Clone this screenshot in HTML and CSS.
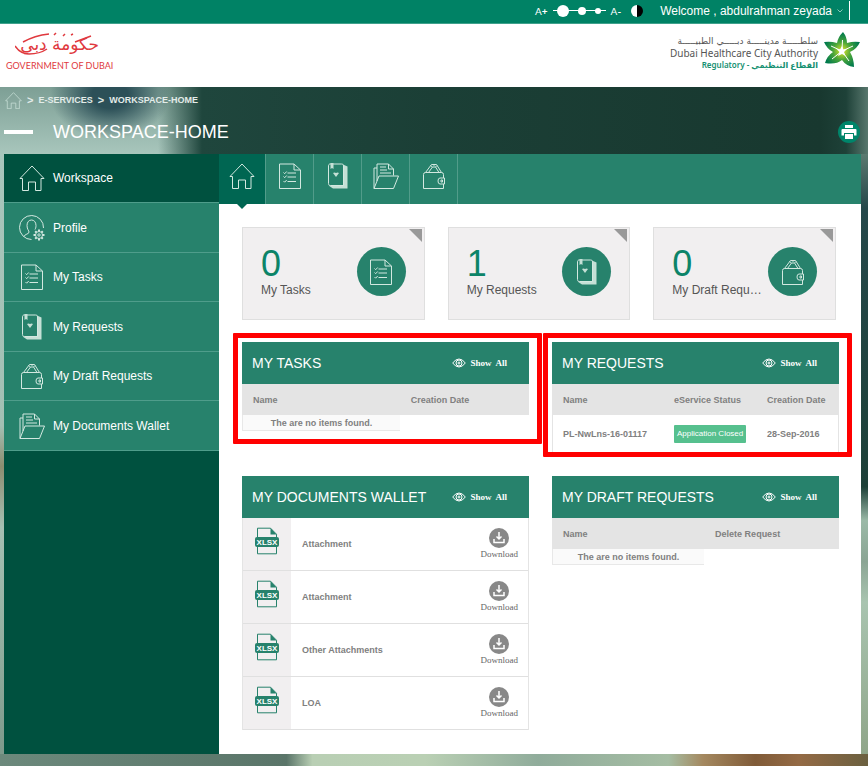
FILE: index.html
```html
<!DOCTYPE html>
<html lang="en">
<head>
    <meta charset="UTF-8">
    <meta name="viewport" content="width=device-width, initial-scale=1.0">
    <title>Workspace-Home</title>
    <link rel="stylesheet" href="styles.css">
</head>
<body>
    <!-- shared icons -->
    <svg class="sprite" aria-hidden="true">
        <symbol id="home" viewBox="0 0 26 26">
            <path d="M1 13.5 13 1l12 12.5h-3v12h-5.5V17h-7v8.5h-6v-12z"/>
        </symbol>
        <symbol id="profile" viewBox="0 0 26 26">
            <path d="M12.5 24.5A12 12 0 1 1 24.5 13M5 21.5c1-3 5-2 5-4.500 0-1.500-2-2.500-2-6.500 0-3.500 2-5.500 4.500-5.500s4.500 2 4.500 5.500c0 2-.5 3-1 4"/>
            <circle cx="20" cy="20" r="3.5"/>
            <circle cx="20" cy="20" r="1.2"/>
            <path stroke-width="2" d="M20 14.5v2M20 23.5v2M14.5 20h2M23.500 20h2M16.200 16.200l1.300 1.300M22.500 22.500l1.300 1.300M16.200 23.800l1.300-1.300M22.500 17.500l1.300-1.300"/>
        </symbol>
        <symbol id="tasks" viewBox="0 0 26 26">
            <path d="M2.5 1H17l6.500 6v18.500h-21zM17 1v6h6.500M10.500 10H19M10.500 14H19M10.500 18.500H19M6.500 9.500l1.200 1.200 2-2.200M6.500 13.500l1.200 1.200 2-2.200M6.500 18l1.200 1.200 2-2.200"/>
        </symbol>
        <symbol id="requests" viewBox="0 0 26 26">
            <path class="solid" d="M18 1.500l4.500 2V25.500H8L3.500 22.500H18z"/>
            <path d="M5 1h11.500c1.300 0 2 .7 2 2v19.500h-13c-1.300 0-2-.7-2-2V3c0-1.200.5-2 1.500-2z"/>
            <path class="solid" d="M5.500 0h3v6L7 5 5.500 6zM8 10q1.500-1 3 0 1.500-1 3 0l-3 4z"/>
        </symbol>
        <symbol id="draft" viewBox="0 0 26 26">
            <path d="M2.500 25.500v-14q0-2 2-2h16q2 0 2 2V15M22.500 21v4.500h-20M4.500 9.500l6-8h5l5 8M7.500 9.500l4-5.500h3l3.500 5.500M9.500 2.500l2 1.500M16 2.500 14.500 4M12 1l1 1.500L14 1"/>
            <path d="M23.500 15H19q-2 0-2 3t2 3h4.500zM20 17h1.500v2H20z"/>
        </symbol>
        <symbol id="folder" viewBox="0 0 26 26">
            <path d="M1 25.500V5h3M1 25.500h19.500l5-12.500H6zM4 18V1h11.500l5 5v6.500M15.500 1v5h5M7 4h6M7 7h7M7 10h11"/>
        </symbol>
        <symbol id="eye" viewBox="0 0 14 10">
            <path d="M.7 5Q3.500 1 7 1t6.300 4Q10.500 9 7 9T.7 5z"/>
            <circle cx="7" cy="5" r="3"/>
            <circle cx="7" cy="5" r="1"/>
        </symbol>
        <symbol id="xlsx" viewBox="0 0 26 28">
            <path d="M3.500 10V1.200h13l6 6V10M3.500 19v7.800h19V19"/>
            <path class="solid" d="M16.500 1v6.500h6z"/>
            <rect class="solid" x="1" y="10" width="24" height="10" rx="2"/>
            <text x="13" y="18" text-anchor="middle">XLSX</text>
        </symbol>
        <symbol id="download" viewBox="0 0 20 20">
            <circle class="disc" cx="10" cy="10" r="10"/>
            <path d="M10 4v7M7.500 8.500 10 11l2.500-2.500M5 11v3.500h10V11"/>
        </symbol>
    </svg>

    <div class="topbar">
        <div class="font-size">
            <button type="button">A<b>+</b></button>
            <div class="dots">
                <button type="button" class="dot dot-large" aria-label="Large text"></button>
                <button type="button" class="dot dot-medium" aria-label="Medium text"></button>
                <button type="button" class="dot dot-small" aria-label="Small text"></button>
            </div>
            <button type="button">A<b>-</b></button>
        </div>
        <button type="button" class="contrast" aria-label="Contrast"></button>
        <button type="button" class="user">Welcome , abdulrahman zeyada
            <svg class="chevron" viewBox="0 0 6 4"><path d="M.5.5 3 3 5.500.5"/></svg>
        </button>
    </div>

    <header class="header">
        <a href="#" class="gov-logo">
            <svg viewBox="0 0 88 28" aria-hidden="true">
                <path d="M0 14c4 6 8 8 14 8 6 0 12-1 18-5M8 10C17 5 25 3 34 2"/>
                <path d="M76 4 60 10M39 3l2-2M48 4l2-2M56 3l2-1"/>
                <text x="84" y="18" text-anchor="end">حكومة دبي</text>
            </svg>
            <span>GOVERNMENT OF DUBAI</span>
        </a>
        <a href="#" class="dhcc-logo">
            <span class="dhcc-text">
                <span class="dhcc-ar" lang="ar" dir="rtl">سلطـــــة مدينـــــة دبـــــي الطبيـــــة</span>
                <span class="dhcc-en">Dubai Healthcare City Authority</span>
                <span class="dhcc-reg">Regulatory - <bdi lang="ar">القطاع التنظيمي</bdi></span>
            </span>
            <svg class="star" viewBox="0 0 36 36" aria-hidden="true">
                <defs>
                    <radialGradient id="leaf" gradientUnits="userSpaceOnUse" cx="18" cy="19" r="18">
                        <stop offset="0.1" stop-color="#c5d92d"/>
                        <stop offset="0.5" stop-color="#4aa53a"/>
                        <stop offset="1" stop-color="#007a4d"/>
                    </radialGradient>
                </defs>
                <path fill="url(#leaf)" d="M19 0q4 5 4 11 6-2 13-1-3 7-10 10 4 7 4 15-8-1-12-7-6 5-17 3 2-7 8-11Q3 17 0 10q7-1 13 1 1-6 6-11z"/>
                <path stroke="#fff" d="M18 19 18.500 8M18 19l11-5M18 19l7 10M18 19 8 27M18 19 7 14"/>
                <path fill="#fff" d="M18 14l1.500 3.500L23 17l-3 3 1.500 4-3.500-2-4 2 1.500-4-3-3 3.500.5z"/>
            </svg>
        </a>
    </header>

    <div class="page">
        <div class="hero">
            <nav class="breadcrumb" aria-label="Breadcrumb">
                <a href="#" aria-label="Home"><svg class="icon"><use href="#home"/></svg></a>
                <span>&gt;</span>
                <a href="#">E-SERVICES</a>
                <span>&gt;</span>
                <a href="#">WORKSPACE-HOME</a>
            </nav>
            <div class="title-row">
                <h1>WORKSPACE-HOME</h1>
                <button type="button" class="print" aria-label="Print">
                    <svg viewBox="0 0 16 16"><path d="M4 1h8v3H4zM1.500 5h13q1 0 1 1v5.500H13V9H3v2.500H.5V6q0-1 1-1zM4 10h8v5H4z"/></svg>
                </button>
            </div>
        </div>

        <div class="shell">
            <nav class="sidebar" aria-label="Workspace">
                <a href="#" class="active"><svg class="icon"><use href="#home"/></svg>Workspace</a>
                <a href="#"><svg class="icon"><use href="#profile"/></svg>Profile</a>
                <a href="#"><svg class="icon"><use href="#tasks"/></svg>My Tasks</a>
                <a href="#"><svg class="icon"><use href="#requests"/></svg>My Requests</a>
                <a href="#"><svg class="icon"><use href="#draft"/></svg>My Draft Requests</a>
                <a href="#"><svg class="icon"><use href="#folder"/></svg>My Documents Wallet</a>
            </nav>

            <main class="main">
                <nav class="tabs" aria-label="Sections">
                    <a href="#" class="active" aria-label="Home"><svg class="icon"><use href="#home"/></svg></a>
                    <a href="#" aria-label="My Tasks"><svg class="icon"><use href="#tasks"/></svg></a>
                    <a href="#" aria-label="My Requests"><svg class="icon"><use href="#requests"/></svg></a>
                    <a href="#" aria-label="My Documents Wallet"><svg class="icon"><use href="#folder"/></svg></a>
                    <a href="#" aria-label="My Draft Requests"><svg class="icon"><use href="#draft"/></svg></a>
                </nav>

                <div class="content">
                    <div class="cards">
                        <a href="#" class="card">
                            <span class="card-text"><span class="count">0</span><span class="label">My Tasks</span></span>
                            <span class="card-icon"><svg class="icon"><use href="#tasks"/></svg></span>
                        </a>
                        <a href="#" class="card">
                            <span class="card-text"><span class="count">1</span><span class="label">My Requests</span></span>
                            <span class="card-icon"><svg class="icon"><use href="#requests"/></svg></span>
                        </a>
                        <a href="#" class="card">
                            <span class="card-text"><span class="count">0</span><span class="label">My Draft Requests</span></span>
                            <span class="card-icon"><svg class="icon"><use href="#draft"/></svg></span>
                        </a>
                    </div>

                    <div class="panels">
                        <section class="panel marked">
                            <div class="panel-head">
                                <h2>MY TASKS</h2>
                                <a href="#"><svg class="eye"><use href="#eye"/></svg>Show&nbsp; All</a>
                            </div>
                            <table class="tasks-table">
                                <thead><tr><th>Name</th><th>Creation Date</th></tr></thead>
                                <tbody><tr><td class="empty">The are no items found.</td></tr></tbody>
                            </table>
                        </section>

                        <section class="panel marked marked-tight">
                            <div class="panel-head">
                                <h2>MY REQUESTS</h2>
                                <a href="#"><svg class="eye"><use href="#eye"/></svg>Show&nbsp; All</a>
                            </div>
                            <table class="requests-table">
                                <thead><tr><th>Name</th><th>eService Status</th><th>Creation Date</th></tr></thead>
                                <tbody>
                                    <tr><td>PL-NwLns-16-01117</td><td><span class="badge">Application Closed</span></td><td>28-Sep-2016</td></tr>
                                </tbody>
                            </table>
                        </section>

                        <section class="panel">
                            <div class="panel-head">
                                <h2>MY DOCUMENTS WALLET</h2>
                                <a href="#"><svg class="eye"><use href="#eye"/></svg>Show&nbsp; All</a>
                            </div>
                            <ul class="documents">
                                <li><span class="file"><svg class="xlsx"><use href="#xlsx"/></svg></span><span class="file-name">Attachment</span><a href="#"><svg class="download"><use href="#download"/></svg>Download</a></li>
                                <li><span class="file"><svg class="xlsx"><use href="#xlsx"/></svg></span><span class="file-name">Attachment</span><a href="#"><svg class="download"><use href="#download"/></svg>Download</a></li>
                                <li><span class="file"><svg class="xlsx"><use href="#xlsx"/></svg></span><span class="file-name">Other Attachments</span><a href="#"><svg class="download"><use href="#download"/></svg>Download</a></li>
                                <li><span class="file"><svg class="xlsx"><use href="#xlsx"/></svg></span><span class="file-name">LOA</span><a href="#"><svg class="download"><use href="#download"/></svg>Download</a></li>
                            </ul>
                        </section>

                        <section class="panel">
                            <div class="panel-head">
                                <h2>MY DRAFT REQUESTS</h2>
                                <a href="#"><svg class="eye"><use href="#eye"/></svg>Show&nbsp; All</a>
                            </div>
                            <table class="draft-table">
                                <thead><tr><th>Name</th><th>Delete Request</th></tr></thead>
                                <tbody><tr><td class="empty">The are no items found.</td></tr></tbody>
                            </table>
                        </section>
                    </div>
                </div>
            </main>
        </div>
    </div>
</body>
</html>
```

FILE: styles.css
```css
* {
    box-sizing: border-box;
}
body {
    margin: 0;
    font-family: "Liberation Sans", Arial, sans-serif;
    font-size: 12px;
    color: #666;
    background: #fff;
}
a {
    color: inherit;
    text-decoration: none;
}
button {
    padding: 0;
    border: 0;
    background: none;
    color: inherit;
    font: inherit;
    cursor: pointer;
}
h1, h2 {
    margin: 0;
    font-weight: normal;
}
svg {
    display: block;
    flex: none;
    fill: none;
}
.sprite {
    display: none;
}
.icon {
    width: 26px;
    height: 26px;
    stroke: #d3e8e0;
}
.solid {
    fill: #c5e0d6;
    stroke: none;
}

/* top bar */
.topbar {
    display: flex;
    align-items: center;
    justify-content: flex-end;
    height: 24px;
    padding: 0 18px 2px 0;
    color: #fff;
    background: #008265;
    border-bottom: 1px solid #40a18c;
}
.font-size {
    display: flex;
    align-items: center;
    gap: 5px;
    font-family: Lato, sans-serif;
    font-size: 10px;
}
.dots {
    display: flex;
    align-items: center;
    gap: 9px;
    width: 53px;
    padding-left: 4px;
    background: linear-gradient(#fff, #fff) center / 100% 1px no-repeat;
}
.dot {
    border-radius: 50%;
    background: #fff;
}
.dot-large {
    width: 12px;
    height: 12px;
}
.dot-medium {
    width: 8px;
    height: 8px;
}
.dot-small {
    width: 6px;
    height: 6px;
}
.contrast {
    width: 12px;
    height: 12px;
    margin: 0 17px 0 10px;
    border-radius: 50%;
    background: linear-gradient(90deg, #fff 50%, #000 50%);
}
.user {
    display: flex;
    align-items: center;
    gap: 5px;
    height: 19px;
    padding-right: 6px;
    border-right: 1px solid #fff;
}
.chevron {
    width: 6px;
    height: 4px;
    stroke: #8cc8b9;
}

/* logos */
.header {
    display: flex;
    justify-content: space-between;
    align-items: flex-start;
    height: 63px;
    padding: 8px 8px 0 6px;
}
.gov-logo {
    color: #e0393e;
    font-family: Lato, sans-serif;
    font-size: 9px;
    line-height: 12px;
}
.gov-logo svg {
    width: 88px;
    height: 28px;
    margin-left: 9px;
    stroke: #e0393e;
    stroke-width: 1.5;
}
.gov-logo text {
    fill: #e0393e;
    stroke: none;
    font-family: "DejaVu Sans", sans-serif;
    font-size: 17px;
}
.dhcc-logo {
    display: flex;
    gap: 6px;
}
.dhcc-text {
    display: flex;
    flex-direction: column;
    align-items: flex-end;
    padding-top: 3px;
    color: #555;
    font-family: "Noto Sans", "DejaVu Sans", sans-serif;
    font-size: 10px;
    line-height: 12px;
}
.dhcc-ar {
    font-family: "DejaVu Sans", sans-serif;
    font-size: 9px;
}
.dhcc-reg {
    color: #159071;
    font-size: 8px;
    font-weight: 600;
}
.star {
    width: 36px;
    height: 36px;
}

/* soft photo tones around the workspace */
.page {
    padding: 0 7px 12px 4px;
    background:
        linear-gradient(90deg, #6c897c 0, #5a7569 33%, #b9cfb4 36%, #bad0b4 49%, #90ac9b 62%, #a5bda3 77%, #a4885f 81%, #805b38 87%, #946a45 92%, #6b6040) bottom / 100% 12px no-repeat,
        linear-gradient(#a8c6bc 0, #a3c0b4 40%, #8c8d70 46%, #a5c0b3 55%, #8fab9c 75%, #6c897c) left 67px / 4px 100% no-repeat,
        linear-gradient(#5b7a70 0, #25484a 8%, #1d4038 49%, #9bb9a7 54%, #8ba594 60%, #a9c4b0 66%, #90a68a 88%, #6c6a45) right 67px / 7px 100% no-repeat,
        radial-gradient(ellipse 60px 44px at 110px 8px, #2c5058 30%, rgba(44, 80, 88, 0)) no-repeat,
        linear-gradient(90deg, rgba(31, 70, 61, 0) 158px, #1f463d 202px, #1b3f36 50%, #18382f 820px, #1e4138 846px, #58776d) no-repeat,
        linear-gradient(#7d9f95, #a8c6bc 67px);
}
.hero {
    height: 67px;
    padding-top: 4px;
    color: #fff;
}
.breadcrumb {
    display: flex;
    align-items: center;
    gap: 5px;
    height: 18px;
    padding-left: 1px;
    font-size: 9px;
    font-weight: bold;
    color: #e3ece9;
}
.breadcrumb span {
    font-size: 11px;
}
.breadcrumb .icon {
    width: 17px;
    height: 17px;
}
.title-row {
    display: flex;
    align-items: center;
    height: 24px;
    margin-top: 11px;
    padding-right: 1px;
}
.title-row::before {
    content: "";
    width: 29px;
    height: 4px;
    margin-right: 20px;
    background: #fff;
}
h1 {
    flex: 1;
    font-size: 18px;
}
.print {
    display: grid;
    place-items: center;
    width: 22px;
    height: 22px;
    border-radius: 50%;
    background: #00856a;
}
.print svg {
    width: 16px;
    height: 16px;
    fill: #fff;
}

/* workspace */
.shell {
    display: flex;
}
.sidebar {
    flex: none;
    width: 215px;
    background: #00513f;
}
.sidebar a {
    display: flex;
    align-items: center;
    gap: 8px;
    height: 49px;
    padding-left: 15px;
    color: #fff;
    background: #27826c;
    border-bottom: 1px solid #4f9d8b;
}
.sidebar a:nth-child(even) {
    height: 50px;
}
.sidebar .active {
    background: #00513f;
}
.main {
    flex: 1;
    min-width: 0;
    background: #fff;
}
.tabs {
    display: flex;
    height: 50px;
    background: #27826c;
}
.tabs a {
    position: relative;
    display: flex;
    justify-content: center;
    width: 48px;
    padding-top: 9px;
    border-right: 1px solid #529c8a;
}
.tabs .active {
    width: 47px;
    background: #006652;
}
.tabs .active::after {
    content: "";
    position: absolute;
    top: 100%;
    left: 50%;
    margin-left: -5px;
    border: 5px solid transparent;
    border-top-color: #006652;
    border-bottom: 0;
}
.content {
    padding: 23px 22px 24px 23px;
}

/* counters */
.cards {
    display: grid;
    grid-template-columns: repeat(3, 1fr);
    gap: 23px;
    margin-right: 3px;
}
.card {
    position: relative;
    display: flex;
    align-items: center;
    justify-content: space-between;
    gap: 6px;
    min-width: 0;
    height: 93px;
    padding: 0 18px;
    background: #f1eff0;
    border: 1px solid #dfdfdf;
}
.card::after {
    content: "";
    position: absolute;
    top: 1px;
    right: 2px;
    border-top: 13px solid #999;
    border-left: 13px solid transparent;
}
.card-text {
    min-width: 0;
    padding-bottom: 4px;
}
.count, .label {
    display: block;
}
.count {
    color: #0c8468;
    font-size: 36px;
    line-height: 36px;
}
.label {
    overflow: hidden;
    text-overflow: ellipsis;
    white-space: nowrap;
    line-height: 16px;
    color: #555;
}
.card-icon {
    flex: none;
    display: grid;
    place-items: center;
    width: 49px;
    height: 49px;
    margin-bottom: 4px;
    border-radius: 50%;
    background: #27826c;
}

/* panels */
.panels {
    display: grid;
    grid-template-columns: 1fr 1fr;
    align-items: start;
    gap: 24px 23px;
    margin-top: 22px;
}
.panel {
    position: relative;
    min-width: 0;
}
.marked::after {
    content: "";
    position: absolute;
    inset: -9px -13px -13px -9px;
    border: 5px solid #f00;
    border-radius: 1px;
    pointer-events: none;
}
.marked-tight::after {
    bottom: -5px;
}
.panel-head {
    display: flex;
    align-items: center;
    justify-content: space-between;
    height: 42px;
    padding: 0 22px 0 10px;
    color: #fff;
    background: #27826c;
}
h2 {
    font-size: 14px;
}
.panel-head a {
    display: flex;
    align-items: center;
    gap: 4px;
    font-family: "Liberation Serif", serif;
    font-size: 9px;
    font-weight: bold;
}
.eye {
    width: 14px;
    height: 10px;
    stroke: #fff;
}
table {
    width: 100%;
    table-layout: fixed;
    border-collapse: separate;
    border-spacing: 0;
    font-size: 9px;
    font-weight: bold;
    color: #808080;
}
th {
    height: 31px;
    padding: 0 0 0 11px;
    text-align: left;
    white-space: nowrap;
    background: #e4e4e4;
}
td {
    height: 37px;
    padding: 0 0 0 11px;
    white-space: nowrap;
}
.requests-table td:first-child {
    border-left: 1px solid #e4e4e4;
    padding-left: 10px;
}
.requests-table td:last-child {
    border-right: 1px solid #e4e4e4;
}
.tasks-table th:first-child {
    width: 55%;
}
.draft-table th:first-child {
    width: 53%;
}
.requests-table th:first-child {
    width: 111px;
}
.requests-table th:last-child {
    width: 83px;
}
.empty {
    height: 16px;
    padding: 0;
    text-align: center;
    background: #fafafa;
    border: solid #e8e8e8;
    border-width: 0 0 1px 1px;
}
.badge {
    display: inline-block;
    padding: 0 3px;
    border-radius: 1px;
    color: #fff;
    background: #56c08e;
    font-size: 8px;
    font-weight: normal;
    line-height: 18px;
}

/* documents */
.documents {
    margin: 0;
    padding: 0;
    list-style: none;
    border: solid #e4e4e4;
    border-width: 0 1px;
}
.documents li {
    display: flex;
    align-items: center;
    height: 53px;
    padding-right: 10px;
    border-bottom: 1px solid #e0e0e0;
}
.file {
    display: flex;
    justify-content: center;
    align-self: stretch;
    width: 48px;
    padding-top: 9px;
    background: #f1eff0;
}
.xlsx {
    width: 26px;
    height: 28px;
    stroke: #27826c;
}
#xlsx .solid {
    fill: #27826c;
}
#xlsx text {
    fill: #fff;
    stroke: none;
    font-size: 8px;
    font-weight: bold;
}
.file-name {
    flex: 1;
    padding-left: 11px;
    font-size: 9px;
    font-weight: bold;
    color: #808080;
}
.documents a {
    display: flex;
    flex-direction: column;
    align-items: center;
    font-family: "Liberation Serif", serif;
    font-size: 9px;
    line-height: 12px;
}
.download {
    width: 20px;
    height: 20px;
    stroke: #fff;
    stroke-width: 1.5;
}
.disc {
    fill: #888;
    stroke: none;
}
```
